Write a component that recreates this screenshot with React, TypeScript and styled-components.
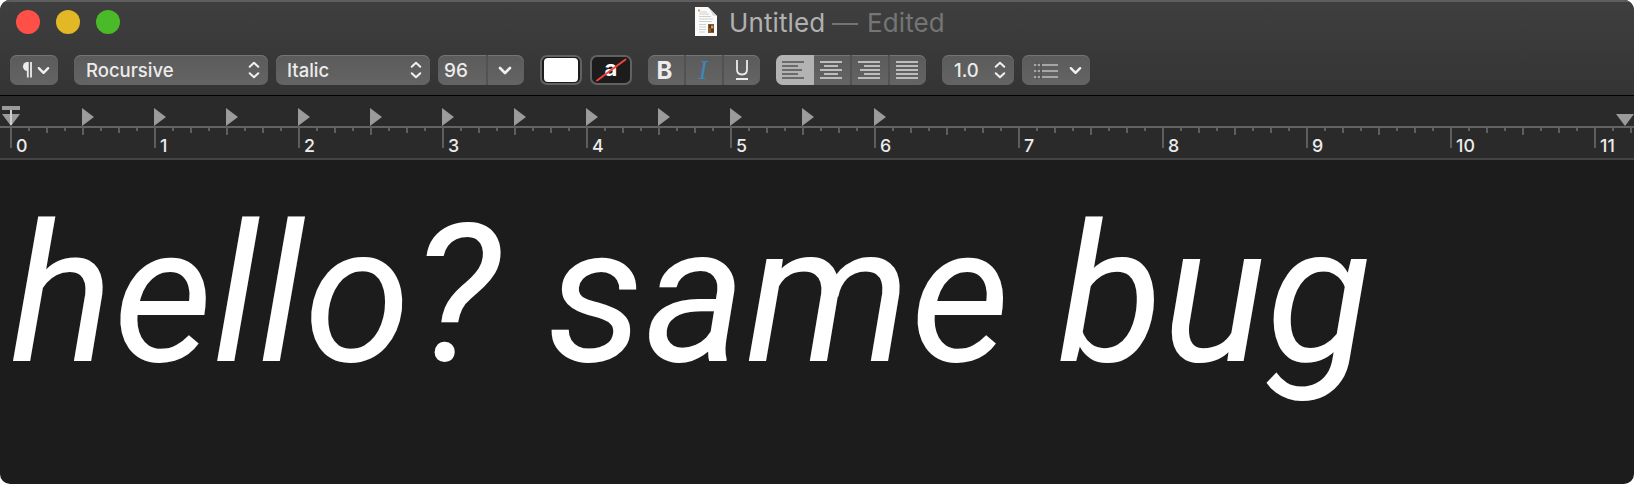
import React from "react";
import styled, { createGlobalStyle, css } from "styled-components";

const GlobalStyle = createGlobalStyle`
  html, body { margin: 0; padding: 0; background: #fff; }
  * { box-sizing: border-box; }
`;

const Window = styled.div`
  display: flex;
  flex-direction: column;
  width: 1634px;
  height: 484px;
  overflow: hidden;
  border-radius: 10px;
  background: #1c1c1c;
  color: #ececec;
  font-family: Inter, "Liberation Sans", sans-serif;
`;

const Header = styled.header`
  flex: none;
  height: 96px;
  border-bottom: 1px solid #000;
  background: linear-gradient(#3f3f3f, #343434);
  box-shadow: inset 0 2px 0 #5e5e5e;
`;

const TitleBar = styled.div`
  display: grid;
  grid-template-columns: 695px auto 1fr;
  height: 55px;
`;

const Lights = styled.div`
  display: flex;
  gap: 16px;
  padding: 10px 0 0 16px;
`;

const Light = styled.span<{ $color: string }>`
  width: 24px;
  height: 24px;
  border-radius: 50%;
  background: ${(p) => p.$color};
`;

const Title = styled.div`
  display: flex;
  padding-top: 7px;
  height: 40px;
  font-size: 26px;
  line-height: 32px;
  letter-spacing: 0.1px;
  color: #b1b1b1;
  white-space: pre;
`;

const DocName = styled.span`
  margin-left: 11px;
  width: 103px;
`;

const Faded = styled.span<{ $width?: number }>`
  color: #757575;
  width: ${(p) => (p.$width ? `${p.$width}px` : "auto")};
`;

const Toolbar = styled.div`
  display: flex;
  align-items: flex-start;
  height: 40px;
  padding-left: 10px;
`;

const buttonFace = css`
  height: 30px;
  border-radius: 7px;
  background: linear-gradient(#5b5b5b, #646464);
  box-shadow: inset 0 1px 0 #747474;
`;

const Control = styled.div<{ $width: number; $gap?: number; $pad?: number }>`
  ${buttonFace}
  display: flex;
  align-items: center;
  justify-content: space-between;
  width: ${(p) => p.$width}px;
  margin-right: ${(p) => p.$gap ?? 8}px;
  padding: 0 8px 0 ${(p) => p.$pad ?? 12}px;
  font-size: 18.5px;
  font-weight: 500;
  line-height: 30px;
`;

const Group = styled.div<{ $gap: number }>`
  ${buttonFace}
  display: flex;
  overflow: hidden;
  margin-right: ${(p) => p.$gap}px;
`;

const Segment = styled.div<{
  $width: number;
  $divided?: boolean;
  $active?: boolean;
  $start?: number;
  $end?: number;
}>`
  display: flex;
  align-items: center;
  justify-content: ${(p) => (p.$start ? "flex-start" : "center")};
  width: ${(p) => p.$width}px;
  height: 30px;
  padding-left: ${(p) => p.$start ?? 0}px;
  padding-right: ${(p) => p.$end ?? 0}px;
  font-size: 19px;
  font-weight: 500;
  border-right: ${(p) => (p.$divided ? "2px solid #525252" : "0")};
  background: ${(p) => (p.$active ? "#b3b3b3" : "transparent")};
`;

const Swatch = styled.div<{ $gap: number }>`
  position: relative;
  display: flex;
  justify-content: center;
  width: 42px;
  height: 30px;
  margin-right: ${(p) => p.$gap}px;
  border: 2px solid #626262;
  border-radius: 7px;
  background: #1c1c1c;
`;

const SwatchFill = styled.div`
  flex: 1;
  margin: 1px 2px;
  border-radius: 4px;
  background: #fff;
`;

const SwatchLetter = styled.span`
  color: #fff;
  font-size: 22px;
  font-weight: 700;
  line-height: 23px;
`;

const Strike = styled.svg`
  position: absolute;
  inset: 0;
`;

const Bold = styled.span`
  font-size: 24px;
  font-weight: 700;
`;

const Italic = styled.span`
  color: #3d86b5;
  font: italic 27px/30px "Liberation Serif", serif;
`;

const Ruler = styled.div`
  flex: none;
  height: 64px;
  border-bottom: 2px solid #444;
  background: #2a2a2a;
  overflow: hidden;
`;

const Markers = styled.div`
  display: flex;
  align-items: flex-end;
  height: 32px;
  padding-left: 2px;
  border-bottom: 2px solid #636363;
`;

const TabStops = styled.div`
  display: flex;
  gap: 60px;
  margin-left: 62px;
  flex: 1;
`;

const Scale = styled.div`
  display: flex;
  padding-left: 10px;
  width: 1800px;
`;

const Inch = styled.div`
  flex: none;
  width: 144px;
  height: 20px;
  border-left: 2px solid #5e5e5e;
`;

const Ticks = styled.div`
  display: flex;
  gap: 16px;
  height: 7px;
  padding-left: 16px;
`;

const Tick = styled.span<{ $height: number }>`
  width: 2px;
  height: ${(p) => p.$height}px;
  background: #5e5e5e;
`;

const Label = styled.div`
  padding-left: 4px;
  font-size: 17.8px;
  font-weight: 500;
  line-height: 22px;
  height: 22px;
`;

const Page = styled.main`
  flex: 1;
  padding-left: 10px;
  padding-top: 22px;
  color: #fff;
  font: italic 400 193.4px/226px Roboto, sans-serif;
  white-space: pre;
`;

const Chevron = ({ width = 14 }: { width?: number }) => (
  <svg width={width} height={9} viewBox="0 0 14 9" fill="none" stroke="#f0f0f0" strokeWidth="2.6" strokeLinecap="round" strokeLinejoin="round">
    <path d="M2 2 7 7 12 2" />
  </svg>
);

const UpDown = () => (
  <svg width="12" height="18" viewBox="0 0 12 18" fill="none" stroke="#f0f0f0" strokeWidth="2" strokeLinecap="round" strokeLinejoin="round">
    <path d="M1.7 5.8 6 1.8 10.3 5.8M1.7 12.2 6 16.2 10.3 12.2" />
  </svg>
);

const DocumentIcon = () => (
  <svg width="23" height="30" viewBox="0 0 23 30">
    <path d="M0 0H13L22 9V29H0Z" fill="#fbfbfb" />
    <path d="M13 0 22 9Q17 9.500 16.500 5.500Q15 3 13 0Z" fill="#d8d8d8" />
    <path d="M3 3.500h2" stroke="#e2a052" strokeWidth="2" />
    <path d="M5 5h7M4 7h10M4 9.500h12M4 12h14M4 14.500h13M4 17.500h7M4 20h7M4 22.500h7M4 25h6" stroke="#c9c9c9" strokeWidth=".9" />
    <path d="M13 17h6v9h-6z" fill="#8a5a2c" />
    <path d="M14 18h2v3h-2zM16 22h3v3h-3z" fill="#5a3a20" />
    <path d="M16 19h2v2h-2z" fill="#d7a468" />
  </svg>
);

const lineSets: Record<string, [number, number][]> = {
  left: [[0, 22], [0, 16], [0, 20], [0, 16], [0, 22]],
  center: [[0, 22], [4, 18], [0, 22], [4, 18], [0, 22]],
  right: [[0, 22], [6, 22], [2, 22], [6, 22], [0, 22]],
  justify: [[0, 22], [0, 22], [0, 22], [0, 22], [0, 22]],
};

const AlignIcon = ({ kind, color = "#bdbdbd" }: { kind: string; color?: string }) => (
  <svg width="22" height="18" viewBox="0 0 22 18" stroke={color} strokeWidth="2">
    {lineSets[kind].map(([a, b], i) => (
      <path key={i} d={`M${a} ${1 + i * 4}H${b}`} />
    ))}
  </svg>
);

const ListIcon = () => (
  <svg width="25" height="18" viewBox="0 0 25 18" stroke="#a6a6a6" strokeWidth="2">
    <path d="M0 4H6M0 10H6M0 16H6M8 4H24M8 10H24M8 16H24" />
    <path d="M3 1V18M7 1V18" stroke="#555" strokeWidth="1.500" />
  </svg>
);

const Pilcrow = () => (
  <svg width="11" height="16" viewBox="0 0 11 16">
    <path d="M5.500 0V9A4.500 4.500 0 0 1 5.500 0Z" fill="#ececec" />
    <path d="M5.800 0V15.500M9 0V15.500" stroke="#ececec" strokeWidth="1.800" />
  </svg>
);

const Underlined = () => (
  <svg width="14" height="22" viewBox="0 0 14 22" fill="none" stroke="#ececec">
    <path d="M2 1V10.500Q2 15.500 7 15.500T12 10.500V1" strokeWidth="1.800" />
    <path d="M1 20H13" strokeWidth="2" />
  </svg>
);

const TabStop = () => (
  <svg width="12" height="18" viewBox="0 0 12 18"><path d="M0 0 12 9 0 18Z" fill="#9b9b9b" /></svg>
);

const IndentMarker = () => (
  <svg width="18" height="20" viewBox="0 0 18 20">
    <path d="M0 0H18V4H0ZM0 8H18L9 20Z" fill="#9b9b9b" />
    <path d="M9 4V19" stroke="#cecece" strokeWidth="2" />
  </svg>
);

const RightMarker = () => (
  <svg width="18" height="12" viewBox="0 0 18 12"><path d="M0 0H18L9 12Z" fill="#9b9b9b" /></svg>
);

const tickHeights = [3, 5, 3, 7, 3, 5, 3];

export default function App() {
  return (
    <>
      <GlobalStyle />
      <Window>
        <Header>
          <TitleBar>
            <Lights>
              <Light $color="#ff5047" />
              <Light $color="#e2b827" />
              <Light $color="#4bba28" />
            </Lights>
            <Title>
              <DocumentIcon />
              <DocName>Untitled</DocName>
              <Faded $width={35}>—</Faded>
              <Faded>Edited</Faded>
            </Title>
          </TitleBar>
          <Toolbar>
            <Control $width={48} $gap={16}><Pilcrow /><Chevron width={13} /></Control>
            <Control $width={194}>Rocursive<UpDown /></Control>
            <Control $width={154} $pad={11}>Italic<UpDown /></Control>
            <Group $gap={16}>
              <Segment $width={50} $divided $start={6}>96</Segment>
              <Segment $width={36} $end={3}><Chevron width={16} /></Segment>
            </Group>
            <Swatch $gap={8}><SwatchFill /></Swatch>
            <Swatch $gap={16}>
              <SwatchLetter>a</SwatchLetter>
              <Strike width="38" height="26" viewBox="0 0 38 26">
                <path d="M5 23.500 33.500 2.500" stroke="#f0443a" strokeWidth="2" strokeLinecap="round" />
              </Strike>
            </Swatch>
            <Group $gap={16}>
              <Segment $width={38} $divided $end={3}><Bold>B</Bold></Segment>
              <Segment $width={38} $divided $end={2}><Italic>I</Italic></Segment>
              <Segment $width={36}><Underlined /></Segment>
            </Group>
            <Group $gap={16}>
              <Segment $width={38} $active $end={4}><AlignIcon kind="left" color="#6b6b6b" /></Segment>
              <Segment $width={38} $divided $end={2}><AlignIcon kind="center" /></Segment>
              <Segment $width={38} $divided $end={2}><AlignIcon kind="right" /></Segment>
              <Segment $width={36} $end={2}><AlignIcon kind="justify" /></Segment>
            </Group>
            <Control $width={72}>1.0<UpDown /></Control>
            <Control $width={68}><ListIcon /><Chevron width={13} /></Control>
          </Toolbar>
        </Header>
        <Ruler>
          <Markers>
            <IndentMarker />
            <TabStops>
              {Array.from({ length: 12 }, (_, i) => <TabStop key={i} />)}
            </TabStops>
            <RightMarker />
          </Markers>
          <Scale>
            {Array.from({ length: 12 }, (_, n) => (
              <Inch key={n}>
                <Ticks>{tickHeights.map((h, i) => <Tick key={i} $height={h} />)}</Ticks>
                <Label>{n}</Label>
              </Inch>
            ))}
          </Scale>
        </Ruler>
        <Page>hello? same bug</Page>
      </Window>
    </>
  );
}
